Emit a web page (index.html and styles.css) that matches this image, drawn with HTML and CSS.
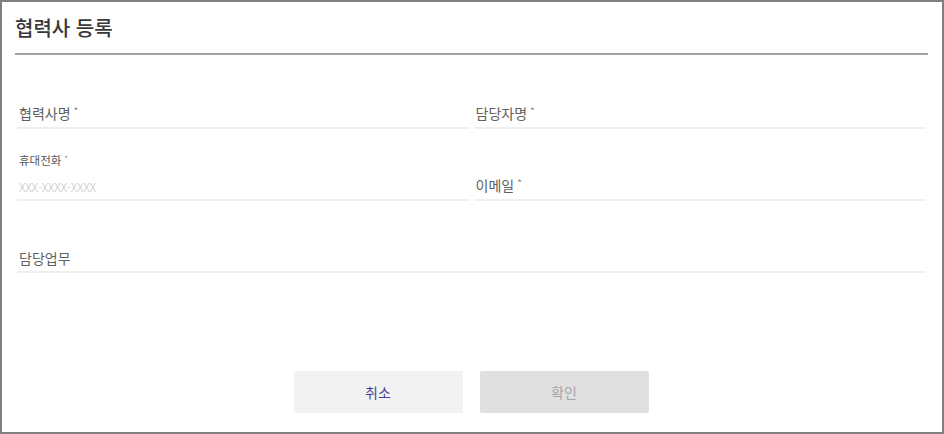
FILE: index.html
```html
<!DOCTYPE html>
<html lang="ko">
<head>
<meta charset="utf-8">
<link rel="stylesheet" href="styles.css">
</head>
<body>
<div class="frame">
  <div class="header"><h1 class="title">협력사 등록</h1></div>
  <div class="form">
    <div class="field"><span class="label">협력사명<span class="req">*</span></span></div>
    <div class="field"><span class="label">담당자명<span class="req">*</span></span></div>
    <div class="field field-phone">
      <span class="small-label">휴대전화<span class="req">*</span></span>
      <span class="placeholder">XXX-XXXX-XXXX</span>
    </div>
    <div class="field"><span class="label">이메일<span class="req">*</span></span></div>
    <div class="field field-wide"><span class="label">담당업무</span></div>
  </div>
  <div class="actions">
    <button class="btn btn-cancel">취소</button>
    <button class="btn btn-ok">확인</button>
  </div>
</div>
</body>
</html>
```
FILE: styles.css
```css
html, body {
  margin: 0;
  padding: 0;
  background: #fff;
}
body {
  font-family: "Noto Sans CJK KR", "Noto Sans", sans-serif;
  color: #333;
}
.frame {
  width: 944px;
  height: 434px;
  box-sizing: border-box;
  border: 2px solid #808080;
  display: flex;
  flex-direction: column;
}
.header {
  margin: 0 14px 0 13px;
  padding-top: 13px;
  height: 38px;
  border-bottom: 2px solid #a3a3a3;
}
.title {
  margin: 0;
  font-size: 20px;
  line-height: 26px;
  font-weight: 500;
  color: #383838;
}
.form {
  margin: 2px 16px 0 15px;
  display: grid;
  grid-template-columns: 1fr 1fr;
  column-gap: 4px;
  grid-template-rows: 72px 72px 72px;
}
.field {
  border-bottom: 2px solid #efefef;
  display: flex;
  flex-direction: column;
  justify-content: flex-end;
  padding: 0 0 4px 2px;
}
.field-phone {
  padding-bottom: 2px;
}
.field-wide {
  grid-column: 1 / 3;
  padding-bottom: 3px;
}
.label {
  font-size: 14px;
  line-height: 20px;
  color: #606060;
}
.req {
  font-size: 10px;
  vertical-align: 4px;
  margin-left: 3px;
  color: #888;
}
.small-label {
  font-size: 11.5px;
  line-height: 16px;
  color: #555;
  margin-bottom: 9px;
}
.small-label .req {
  font-size: 8px;
  vertical-align: 3px;
}
.placeholder {
  font-size: 12px;
  line-height: 20px;
  color: #c4c4c4;
  font-weight: 300;
  letter-spacing: -0.2px;
}
.actions {
  margin-top: auto;
  margin-bottom: 19px;
  display: flex;
  justify-content: center;
  gap: 17px;
  padding-right: 2px;
}
.btn {
  width: 169px;
  height: 42px;
  border: none;
  border-radius: 2px;
  font-family: inherit;
  font-size: 14px;
  padding: 0;
}
.btn-cancel {
  background: #f2f2f2;
  color: #4b3f9c;
}
.btn-ok {
  background: #e0e0e0;
  color: #a6a6a6;
}
```
